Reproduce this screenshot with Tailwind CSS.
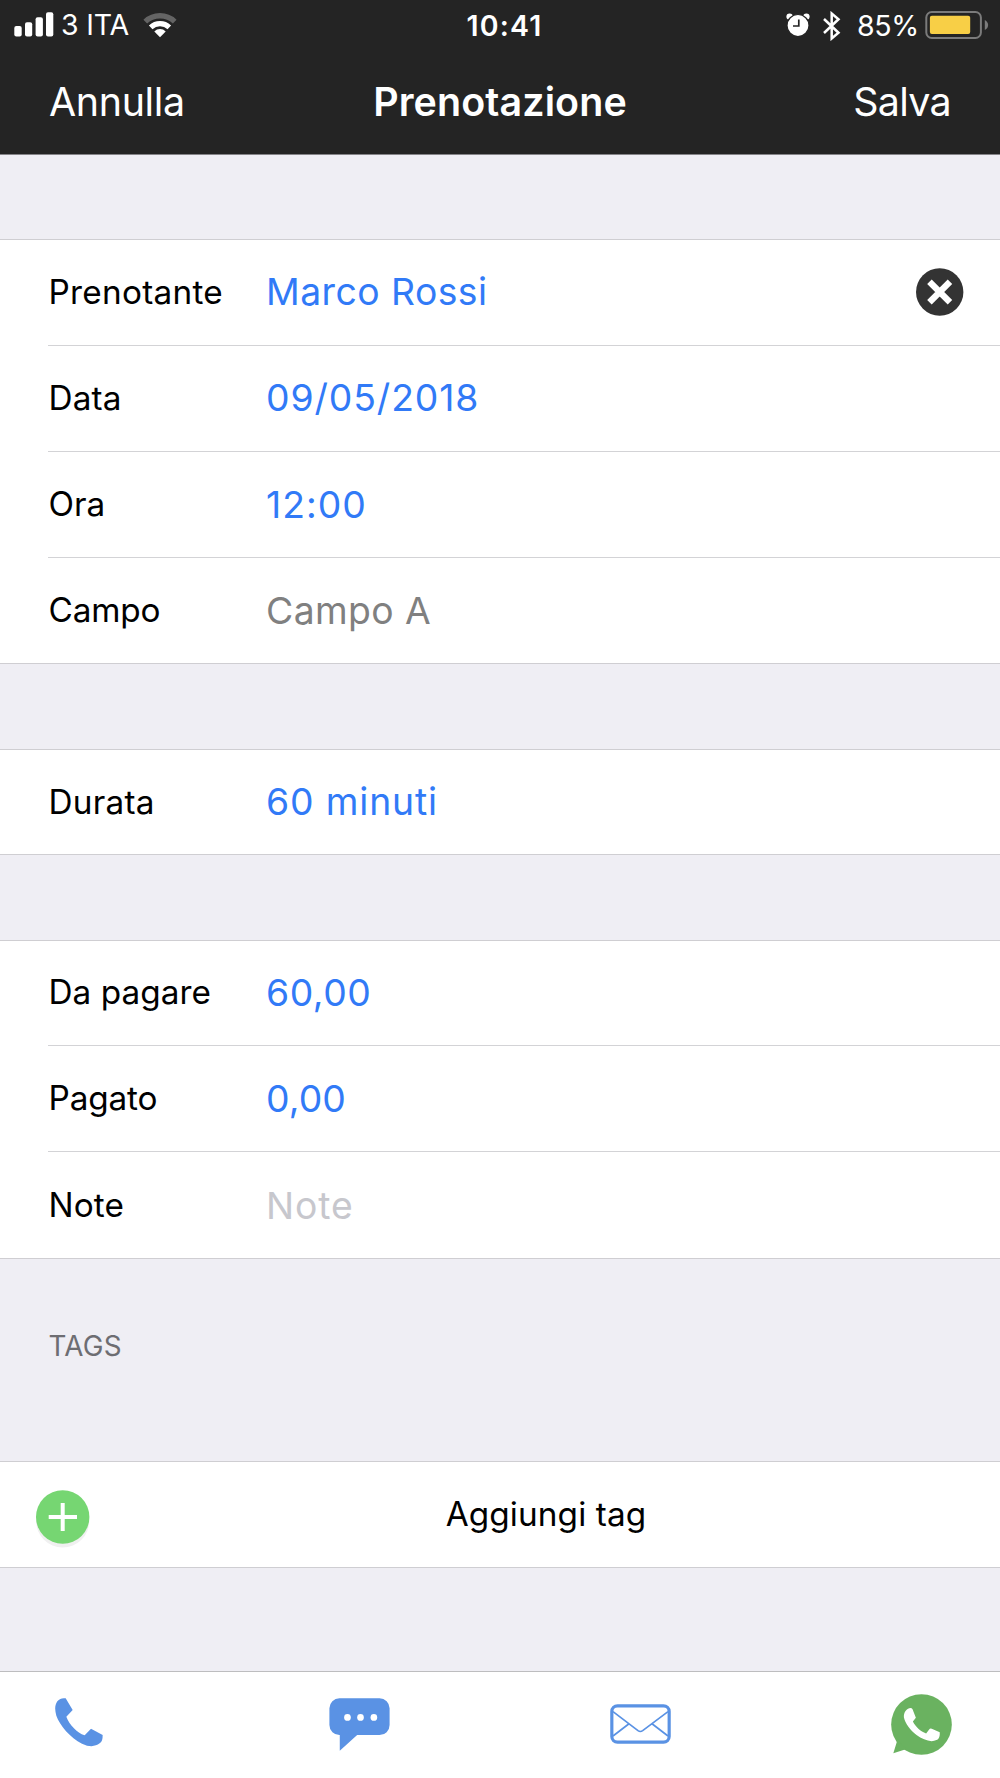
<!DOCTYPE html>
<html lang="it">
<head>
    <meta charset="UTF-8">
    <meta name="viewport" content="width=device-width, initial-scale=1.0">
    <title>Prenotazione</title>
    <script src="https://cdn.jsdelivr.net/npm/@tailwindcss/browser@4"></script>
</head>
<body class="bg-[#efeef4] text-black font-[Inter,'Liberation_Sans',sans-serif]">
    <div class="w-[1000px] h-[1778px] flex flex-col overflow-hidden">

        <!-- Header -->
        <header class="h-[155px] shrink-0 bg-[#242424] border-b border-[#858488] text-white">
            <!-- Status bar -->
            <div class="h-[51px] grid grid-cols-[1fr_auto_1fr] items-center text-[28.5px] leading-none whitespace-nowrap">
                <div class="flex items-center pl-[14px]">
                    <svg class="w-10 h-[26px] -mt-[3px]" viewBox="0 0 40 26" fill="#fff">
                        <rect x="0.3" y="15" width="7.4" height="10.5" rx="2"/>
                        <rect x="11" y="11.2" width="7.2" height="14.3" rx="2"/>
                        <rect x="21.6" y="6.2" width="7.3" height="19.3" rx="2"/>
                        <rect x="32" y="1.3" width="7.3" height="24.2" rx="2"/>
                    </svg>
                    <span class="ml-[7px] tracking-[-0.2px]">3 ITA</span>
                    <svg class="ml-[13.5px] w-[36px] h-[26px] -mt-[2px]" viewBox="0 0 36 26" fill="none">
                        <path d="M3.3 9.6A21.5 21.5 0 0 1 32.7 9.6" stroke="#646464" stroke-width="5.4"/>
                        <path d="M8.7 15.3A13.7 13.7 0 0 1 27.3 15.3" stroke="#fff" stroke-width="5.2"/>
                        <path d="M18 25.3L12.3 19.4A8.2 8.2 0 0 1 23.7 19.4Z" fill="#fff"/>
                    </svg>
                </div>
                <span class="font-semibold tracking-[1.2px] ml-[9px] pt-px">10:41</span>
                <div class="flex items-center justify-end pr-[11px]">
                    <svg class="w-6 h-[26px] -mt-px" viewBox="0 0 24 26" fill="#fff">
                        <circle cx="3.6" cy="4.6" r="3.2"/>
                        <circle cx="20.4" cy="4.6" r="3.2"/>
                        <circle cx="12" cy="13.5" r="11" stroke="#242424" stroke-width="1.2"/>
                        <path d="M12.8 7.5V14H7" fill="none" stroke="#242424" stroke-width="1.7"/>
                    </svg>
                    <svg class="ml-[13px] w-[18px] h-[30px]" viewBox="0 0 18 30" fill="none" stroke="#fff" stroke-width="2.5">
                        <path d="M1 8L15.5 21.8L8.7 27.5V2.5L15.5 8.2L1 22"/>
                    </svg>
                    <span class="ml-[16px] tracking-[-0.33px] pt-px">85%</span>
                    <svg class="ml-[6px] w-16 h-[30px] -mt-[2px]" viewBox="0 0 64 30">
                        <rect x="1.3" y="2" width="54.6" height="26" rx="5.5" fill="none" stroke="#7b7b7b" stroke-width="2"/>
                        <rect x="4.9" y="5.8" width="40.3" height="18.2" rx="2" fill="#f8cf46"/>
                        <path d="M59.8 10C64.2 12 64.2 18 59.8 20Z" fill="#7b7b7b"/>
                    </svg>
                </div>
            </div>
            <!-- Navigation bar -->
            <div class="h-[104px] grid grid-cols-[1fr_auto_1fr] items-center pl-[49px] pr-[49px] text-[39.4px] leading-none">
                <span class="tracking-[-0.35px]">Annulla</span>
                <span class="font-semibold tracking-[0.12px]">Prenotazione</span>
                <span class="text-right tracking-[-0.69px]">Salva</span>
            </div>
        </header>

        <main class="flex-1 text-[33.3px] leading-none">
            <!-- Booking -->
            <section class="mt-[84px] border-y border-[#cfced2] bg-white">
                <div class="ml-12 h-[106px] flex items-center border-b border-[#d3d3d6]">
                    <span class="w-[218px] pl-[0.5px] tracking-[0.28px]">Prenotante</span>
                    <span class="pb-px text-[37.3px] tracking-[0.46px] text-[#317af7]">Marco Rossi</span>
                    <svg class="ml-auto mr-9 mb-px w-12 h-12" viewBox="0 0 48 48">
                        <circle cx="23.7" cy="24" r="23.7" fill="#333"/>
                        <path d="M15.7 16L31.7 32M31.7 16L15.7 32" stroke="#fff" stroke-width="6.4" stroke-linecap="square" stroke-linejoin="round"/>
                    </svg>
                </div>
                <div class="ml-12 h-[106px] flex items-center border-b border-[#d3d3d6]">
                    <span class="w-[218px] pl-[0.5px] tracking-[0.17px]">Data</span>
                    <span class="pb-px text-[37.3px] tracking-[0.9px] text-[#317af7]">09/05/2018</span>
                </div>
                <div class="ml-12 h-[106px] flex items-center border-b border-[#d3d3d6]">
                    <span class="w-[218px] pl-[0.5px] pt-px">Ora</span>
                    <span class="text-[37.3px] tracking-[1px] text-[#317af7]">12:00</span>
                </div>
                <div class="ml-12 h-[105px] flex items-center">
                    <span class="w-[218px] pl-[0.5px] pt-px tracking-[-0.14px]">Campo</span>
                    <span class="text-[37.3px] tracking-[0.41px] text-[#808080]">Campo A</span>
                </div>
            </section>

            <!-- Duration -->
            <section class="mt-[85px] border-y border-[#cfced2] bg-white">
                <div class="ml-12 h-[104px] flex items-center">
                    <span class="w-[218px] pl-[0.5px] pt-px tracking-[0.26px]">Durata</span>
                    <span class="text-[37.3px] tracking-[0.86px] text-[#317af7]">60 minuti</span>
                </div>
            </section>

            <!-- Payment -->
            <section class="mt-[85px] border-y border-[#cfced2] bg-white">
                <div class="ml-12 h-[105px] flex items-center border-b border-[#d3d3d6]">
                    <span class="w-[218px] pl-[0.5px] tracking-[0.05px]">Da pagare</span>
                    <span class="text-[37.3px] tracking-[0.57px] text-[#317af7]">60,00</span>
                </div>
                <div class="ml-12 h-[106px] flex items-center border-b border-[#d3d3d6]">
                    <span class="w-[218px] pl-[0.5px] pt-px tracking-[-0.13px]">Pagato</span>
                    <span class="text-[37.3px] tracking-[0.13px] text-[#317af7]">0,00</span>
                </div>
                <div class="ml-12 h-[106px] flex items-center">
                    <span class="w-[218px] pl-[0.5px] pt-px tracking-[0.13px]">Note</span>
                    <span class="pt-px text-[37.3px] tracking-[0.9px] text-[#c7c7cd]">Note</span>
                </div>
            </section>

            <!-- Tags -->
            <h2 class="h-[202px] pl-[48.5px] pt-[72.5px] text-[27.8px] leading-[28px] tracking-[0.25px] text-[#6d6d72]">TAGS</h2>
            <section class="h-[107px] flex items-center border-y border-[#cfced2] bg-white">
                <svg class="ml-9 mt-[9px] w-[54px] h-[58px]" viewBox="0 0 54 58">
                    <circle cx="26.7" cy="31" r="26.5" fill="#f0f0f0"/>
                    <circle cx="26.7" cy="27" r="26.7" fill="#76d672"/>
                    <path d="M26.7 13V41M12.7 27H41" stroke="#fff" stroke-width="4"/>
                </svg>
                <span class="flex-1 pl-[2px] text-center tracking-[0.11px]">Aggiungi tag</span>
            </section>
        </main>

        <!-- Toolbar -->
        <footer class="h-[107px] shrink-0 flex items-start justify-between px-12 border-t border-[#bdbdbf] bg-white">
            <svg class="mt-[26px] mx-[6.5px] w-12 h-[48.7px]" viewBox="164 773 144 146" fill="#5a92e4">
                <path d="M196 774L217 809L198 829C207 853 230 877 253 885L272 865L307 884C307 897 305 904 298 909C285 919 268 921 245 910C210 892 178 855 168 826C163 808 163 795 171 783C178 775 186 772 196 774Z"/>
            </svg>
            <svg class="mt-[26px] w-[61px] h-[53.5px]" viewBox="58 773 182 160">
                <path d="M89 774H209A30 30 0 0 1 239 804V854A30 30 0 0 1 209 884H142L90 931V884A30 30 0 0 1 59 854V804A30 30 0 0 1 89 774Z" fill="#5a92e4"/>
                <g fill="#fff">
                    <circle cx="113" cy="831" r="10"/>
                    <circle cx="152" cy="831" r="10"/>
                    <circle cx="192" cy="831" r="10"/>
                </g>
            </svg>
            <svg class="mt-[32px] w-[61px] h-10" viewBox="900 790 183 120" fill="none" stroke="#5a92e4">
                <rect x="905.5" y="795.5" width="172" height="109" rx="17" stroke-width="9.5"/>
                <path d="M909 813L984 870Q991 875 998 870L1074 813M909 886L956 850M1074 886L1027 850" stroke-width="5"/>
            </svg>
            <svg class="mt-[22px] w-[61px] h-[61px]" viewBox="93 101 184 184">
                <circle cx="185" cy="193" r="91.5" fill="#6ab260"/>
                <path d="M108 232Q113 240 110 247L100 280L133 269Q138 268 144 273Z" fill="#6ab260"/>
                <path d="M148 144Q155 142 158 147L168 173L159 184C167 200 182 214 199 220L208 208Q211 204 216 206L240 216C241 230 237 237 230 240C214 248 190 240 170 225C150 209 136 190 132 172C131 158 138 147 148 144Z" fill="#fff"/>
            </svg>
        </footer>
    </div>
</body>
</html>
